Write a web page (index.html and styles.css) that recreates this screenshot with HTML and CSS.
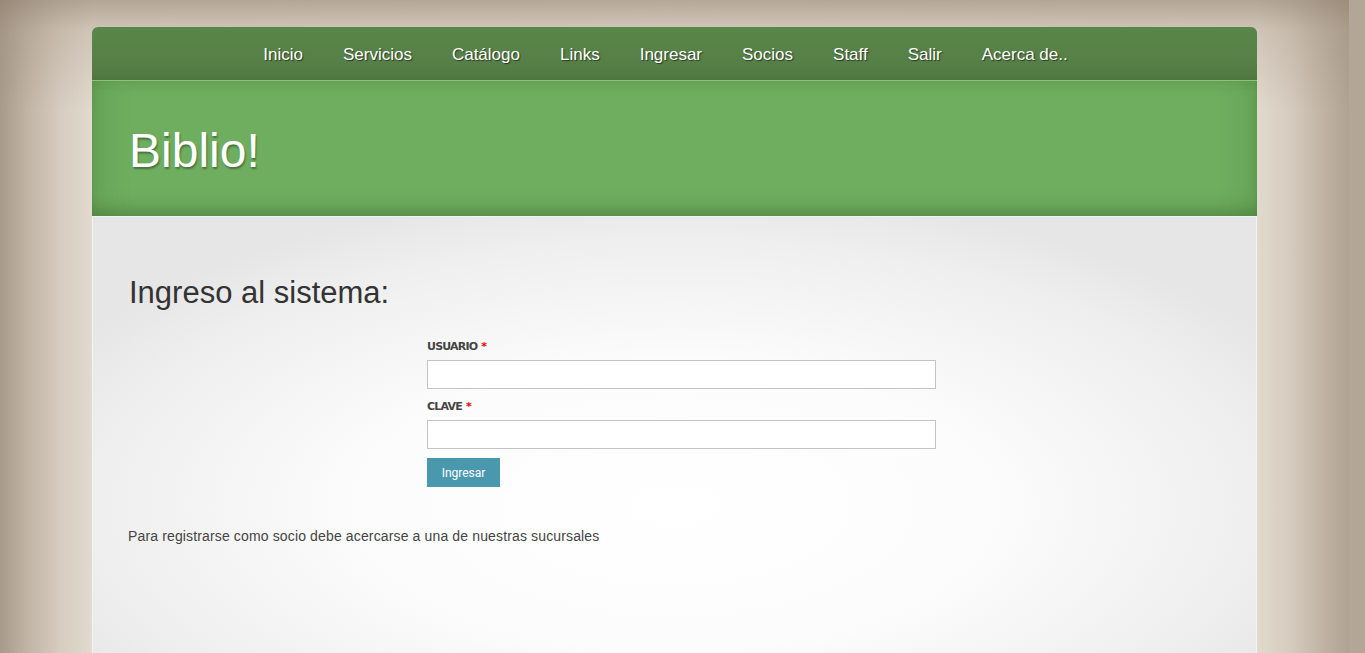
FILE: index.html
```html
<!DOCTYPE html>
<html lang="es">
<head>
<meta charset="utf-8">
<title>Biblio!</title>
<link rel="stylesheet" href="styles.css">
</head>
<body>
<div class="page">
  <nav class="topnav">
    <a href="#">Inicio</a>
    <a href="#">Servicios</a>
    <a href="#">Catálogo</a>
    <a href="#">Links</a>
    <a href="#">Ingresar</a>
    <a href="#">Socios</a>
    <a href="#">Staff</a>
    <a href="#">Salir</a>
    <a href="#">Acerca de..</a>
  </nav>
  <header class="banner">
    <h1>Biblio!</h1>
  </header>
  <main class="content">
    <h2>Ingreso al sistema:</h2>
    <form class="login">
      <label class="field-label">USUARIO <span class="req">*</span></label>
      <input class="field" type="text">
      <label class="field-label">CLAVE <span class="req">*</span></label>
      <input class="field" type="password">
      <button class="btn" type="button">Ingresar</button>
    </form>
    <p class="note">Para registrarse como socio debe acercarse a una de nuestras sucursales</p>
  </main>
</div>
</body>
</html>
```

FILE: styles.css
```css
html {
  min-height: 100%;
  background: #b3a696;
}
body {
  margin: 0;
  width: 1349px;
  min-height: 100vh;
  font-family: "Liberation Sans", Arial, sans-serif;
  background:
    linear-gradient(rgba(140, 122, 104, 0.55) 0, rgba(150, 132, 114, 0.25) 30px, rgba(160, 142, 124, 0) 110px),
    linear-gradient(to right, #a89a8a 0, #c2b6a7 30px, #d6ccbf 60px, #e2dace 92px, #e6dfd4 50%, #e2dace 1257px, #d6ccbf 1289px, #c2b6a7 1319px, #b0a292 1349px);
  background-size: 1349px 653px;
  background-repeat: no-repeat;
  background-color: #b3a696;
}
.page {
  width: 1165px;
  margin: 0 auto;
  padding-top: 27px;
}
.topnav {
  display: flex;
  justify-content: center;
  align-items: center;
  padding: 2px 18px 0 0;
  box-sizing: border-box;
  border-radius: 6px 6px 0 0;
  background: linear-gradient(#588748, #567f47 70%, #4f763f);
  border-bottom: 1px solid #8cc37b;
  height: 54px;
}
.topnav a {
  color: #fff;
  text-decoration: none;
  font-size: 17px;
  padding: 0 20px;
  text-shadow: 1px 1px 1px rgba(0,0,0,0.55);
}
.banner {
  height: 135px;
  display: flex;
  align-items: center;
  padding: 0 36px;
  background: #6fae5f;
  box-shadow: inset 0 -14px 18px -8px rgba(40,80,30,0.35), inset 0 10px 14px -8px rgba(40,80,30,0.15), inset 30px 0 30px -20px rgba(40,80,30,0.15), inset -30px 0 30px -20px rgba(40,80,30,0.15);
}
.banner h1 {
  margin: 4px 0 0 1px;
  font-weight: normal;
  font-size: 48px;
  color: #fff;
  text-shadow: 1px 2px 2px rgba(0,0,0,0.35);
}
.content {
  min-height: 520px;
  padding: 58px 36px 0;
  border-top: 1px solid #f2f2f2;
  border-left: 1px solid #f4f4f4;
  border-right: 1px solid #f4f4f4;
  background: radial-gradient(ellipse 60% 55% at 50% 50%, #ffffff 0%, #fcfcfc 45%, #eeeeee 85%, #e6e6e6 100%);
}
.content h2 {
  margin: 0;
  font-weight: normal;
  font-size: 31px;
  color: #333;
  line-height: 36px;
}
.login {
  width: 510px;
  margin: 29px 0 0 298px;
  display: flex;
  flex-direction: column;
  align-items: flex-start;
}
.field-label {
  font-family: "DejaVu Sans", Verdana, sans-serif;
  font-weight: bold;
  font-size: 11px;
  letter-spacing: -0.8px;
  color: #444;
  line-height: 14px;
  margin-bottom: 6px;
}
.req {
  color: #e00;
  margin-left: 1px;
}
.field {
  box-sizing: border-box;
  width: 509px;
  height: 29px;
  margin: 0 0 11px 0;
  border: 1px solid #c4c4c4;
  background: #fff;
  outline: none;
}
.btn {
  margin-top: -2px;
  width: 73px;
  height: 29px;
  border: none;
  background: #4a98ad;
  color: #fff;
  font-family: Roboto, "Liberation Sans", sans-serif;
  font-size: 12px;
  padding: 0;
}
.note {
  margin: 41px 0 0 -1px;
  font-size: 14px;
  letter-spacing: 0.14px;
  color: #444;
}
```
